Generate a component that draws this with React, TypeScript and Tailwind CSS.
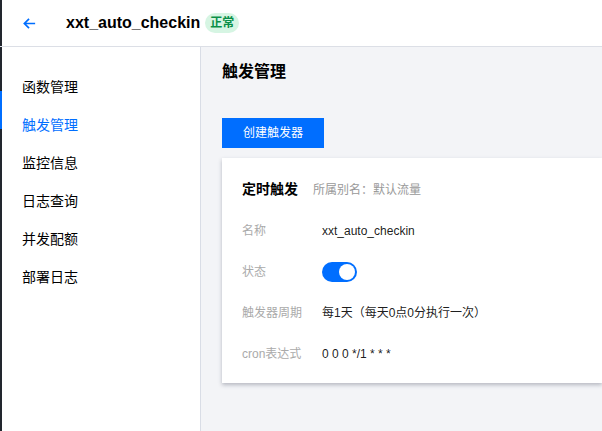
import React from 'react';

const MENU = ['函数管理', '触发管理', '监控信息', '日志查询', '并发配额', '部署日志'];

const ROWS: { label: string; value?: string; toggle?: boolean }[] = [
  { label: '名称', value: 'xxt_auto_checkin' },
  { label: '状态', toggle: true },
  { label: '触发器周期', value: '每1天（每天0点0分执行一次）' },
  { label: 'cron表达式', value: '0 0 0 */1 * * *' },
];

const App: React.FC = () => {
  return (
    <div
      className="w-[602px] h-[431px] overflow-hidden flex flex-col bg-white text-[#000000e6]"
      style={{ fontFamily: '"Liberation Sans", Arial, "Noto Sans CJK SC", sans-serif' }}
    >
      {/* Header */}
      <header className="h-[47px] shrink-0 flex items-center border-b border-[#dcdfe6] pl-[22px] relative">
        <div className="absolute left-0 top-0 bottom-0 w-[2px] bg-[#22262e]" />
        <svg width="15" height="15" viewBox="0 0 16 16" fill="none" className="mt-[1px]">
          <path d="M14 8H2.5M7.5 3L2.5 8l5 5" stroke="#006eff" strokeWidth="1.8" />
        </svg>
        <span className="ml-[29px] text-[16px] font-bold text-[#000]">xxt_auto_checkin</span>
        <span className="ml-[5px] px-[5px] h-[20px] leading-[20px] rounded-full bg-[#d6f5e3] text-[#0a8f47] text-[12px] font-bold">
          正常
        </span>
      </header>

      <div className="flex flex-1 min-h-0">
        {/* Sidebar */}
        <aside className="w-[201px] shrink-0 border-r border-[#d9dde6] relative pt-[21px]">
          <div className="absolute left-0 top-0 bottom-0 w-[2px] bg-[#22262e]" />
          <div className="absolute left-0 top-[44px] h-[38px] w-[2px] bg-[#006eff]" />
          {MENU.map((m, i) => (
            <div
              key={m}
              className={`h-[38px] flex items-center pl-[22px] text-[14px] ${i === 1 ? 'text-[#006eff]' : 'text-[#000]'}`}
            >
              {m}
            </div>
          ))}
        </aside>

        {/* Main */}
        <main className="flex-1 bg-[#f3f4f7] pl-[21px] pt-[15px]">
          <h1 className="text-[16px] font-bold text-[#000] leading-[20px]">触发管理</h1>
          <button className="mt-[36px] w-[102px] h-[30px] bg-[#006eff] text-white text-[12px]">创建触发器</button>
          <div className="mt-[10px] h-[225px] bg-white shadow-[0_2px_4px_rgba(54,58,80,0.32)] pl-[20px] pt-[21px]">
            <div className="flex items-baseline">
              <span className="text-[14px] font-bold text-[#000]">定时触发</span>
              <span className="ml-[15px] text-[12px] text-[#999]">所属别名：默认流量</span>
            </div>
            <div className="mt-[10px] flex flex-col">
              {ROWS.map((r) => (
                <div key={r.label} className="h-[41px] flex items-center text-[12px]">
                  <span className="w-[80px] text-[#aaa]">{r.label}</span>
                  {r.toggle ? (
                    <span className="w-[35px] h-[20px] rounded-full bg-[#006eff] flex items-center justify-end pr-[2px]">
                      <span className="w-[16px] h-[16px] rounded-full bg-white" />
                    </span>
                  ) : (
                    <span className="text-[#000000e6]">{r.value}</span>
                  )}
                </div>
              ))}
            </div>
          </div>
        </main>
      </div>
    </div>
  );
};

export default App;
